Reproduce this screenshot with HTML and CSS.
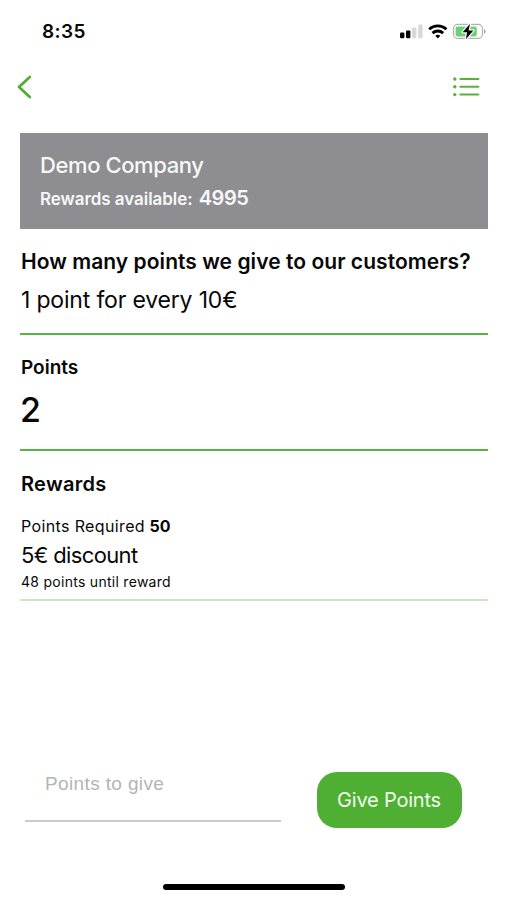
FILE: index.html
```html
<!DOCTYPE html>
<html lang="en">
<head>
  <meta charset="UTF-8" />
  <meta name="viewport" content="width=device-width, initial-scale=1.0"/>
  <title>Demo Company</title>
  <link rel="stylesheet" href="styles.css">
</head>
<body>
  <div class="screen">
    <!-- Status bar -->
    <div class="status-bar">
      <span class="time">8:35</span>
      <svg class="status-icons" width="88" height="20" viewBox="0 0 88 20">
        <rect x="1" y="11.6" width="4.4" height="5.6" rx="1.2"/>
        <rect x="7" y="9.4" width="4.4" height="7.8" rx="1.2"/>
        <rect x="13" y="6.6" width="4.4" height="10.6" rx="1.2" fill="#d8d8d8"/>
        <rect x="19.2" y="3.6" width="4.4" height="13.6" rx="1.2" fill="#d8d8d8"/>
        <g fill="none" stroke="#000" stroke-width="2.8">
          <path d="M30.200 8.300a12.600 12.600 0 0 1 17.200 0"/>
          <path d="M33.500 12.100a7.800 7.800 0 0 1 10.600 0"/>
        </g>
        <path d="M38.800 17.400l-2.500-2.600a3.800 3.800 0 0 1 5 0z"/>
        <rect x="54.500" y="3.400" width="29" height="14" rx="4.200" fill="none" stroke="#b2b2b2" stroke-width="1.200"/>
        <path d="M85 8c2.200.8 2.200 4 0 4.800z" fill="#a9a9a9"/>
        <rect x="56.600" y="5.400" width="21.200" height="10" rx="2.200" fill="#6bd273"/>
        <path d="M71 2.700L63.600 11.200h4.500l-1.200 7 7.400-8.800h-4.700z" stroke="#fff" stroke-width="2.400" stroke-linejoin="round" paint-order="stroke"/>
      </svg>
    </div>

    <!-- Navigation -->
    <div class="nav">
      <svg width="17" height="26" viewBox="0 0 17 26">
        <path d="M14.800 3L4 13l10.800 10" fill="none" stroke="#4caf30" stroke-width="2.700" stroke-linecap="round" stroke-linejoin="round"/>
      </svg>
      <svg width="28" height="22" viewBox="0 0 28 22" fill="#55b23b">
        <circle cx="2.800" cy="3" r="1.700"/>
        <circle cx="2.800" cy="10.800" r="1.700"/>
        <circle cx="2.800" cy="18.600" r="1.700"/>
        <rect x="7.400" y="2" width="20" height="2" rx="1"/>
        <rect x="7.400" y="9.800" width="20" height="2" rx="1"/>
        <rect x="7.400" y="17.600" width="20" height="2" rx="1"/>
      </svg>
    </div>

    <div class="content">
      <div class="company">
        <div class="company-name">Demo Company</div>
        <div class="available"><span class="available-label">Rewards available:</span> <span class="available-count">4995</span></div>
      </div>

      <div class="section rate">
        <div class="question">How many points we give to our customers?</div>
        <div class="answer">1 point for every 10€</div>
      </div>

      <div class="section points">
        <div class="points-title">Points</div>
        <div class="points-value">2</div>
      </div>

      <div class="rewards-title">Rewards</div>
      <div class="reward">
        <div class="required"><span class="required-label">Points Required</span> <b>50</b></div>
        <div class="discount">5€ discount</div>
        <div class="until">48 points until reward</div>
      </div>
    </div>

    <!-- Give points form -->
    <div class="give-form">
      <input class="give-input" type="text" placeholder="Points to give" />
      <button class="give-btn">Give Points</button>
    </div>
    <div class="home-indicator"></div>
  </div>
</body>
</html>
```
FILE: styles.css
```css
* {
  box-sizing: border-box;
  font-family: Inter, sans-serif;
}
body {
  margin: 0;
  background: #fff;
  color: #080808;
}
.screen {
  width: 507px;
  height: 900px;
  display: flex;
  flex-direction: column;
  overflow: hidden;
  white-space: nowrap;
}
.status-bar {
  height: 62px;
  padding: 20px 20px 0 42px;
  display: flex;
  justify-content: space-between;
  align-items: flex-start;
}
.time {
  font-size: 19px;
  line-height: 24px;
  font-weight: 600;
  letter-spacing: 0.4px;
}
.status-icons {
  margin-top: 1px;
}
.nav {
  height: 71px;
  padding: 12px 27px 0 15px;
  display: flex;
  justify-content: space-between;
  align-items: flex-start;
}
.nav svg + svg {
  margin-top: 2px;
}
.content {
  padding: 0 19px 0 20px;
}
.company {
  height: 96px;
  padding: 18px 20px;
  background: #8e8d92;
  color: #f8f8f8;
}
.company-name {
  font-size: 22px;
  line-height: 28px;
  font-weight: 500;
  letter-spacing: -0.4px;
}
.available {
  display: flex;
  align-items: baseline;
  gap: 6px;
  margin-top: 5px;
  line-height: 28px;
}
.available-label {
  font-size: 17px;
  font-weight: 600;
  letter-spacing: -0.05px;
}
.available-count {
  font-size: 20px;
  font-weight: 600;
  letter-spacing: -0.4px;
}
.section {
  border-bottom: 2px solid #55b53f;
  padding-left: 1px;
}
.rate {
  height: 106px;
  padding-top: 18px;
}
.question {
  font-size: 21px;
  line-height: 30px;
  font-weight: 600;
  letter-spacing: 0.05px;
}
.answer {
  margin-top: 7px;
  font-size: 23px;
  line-height: 32px;
  letter-spacing: -0.18px;
}
.points {
  height: 116px;
  padding-top: 20px;
}
.points-title {
  font-size: 19px;
  line-height: 26px;
  font-weight: 600;
}
.points-value {
  margin-top: 9px;
  margin-left: -1px;
  font-size: 34px;
  line-height: 40px;
  font-weight: 500;
}
.rewards-title {
  padding: 20px 0 0 1px;
  font-size: 20px;
  line-height: 26px;
  font-weight: 600;
  letter-spacing: 0.3px;
}
.reward {
  height: 104px;
  padding: 18px 0 0 1px;
  border-bottom: 2px solid #c9e8c2;
}
.required {
  font-size: 16px;
  line-height: 22px;
}
.required-label {
  letter-spacing: 0.37px;
}
.discount {
  margin-top: 4px;
  font-size: 22px;
  line-height: 28px;
  letter-spacing: -0.65px;
}
.until {
  margin-top: 3px;
  font-size: 14px;
  line-height: 20px;
  letter-spacing: 0.28px;
}
.give-form {
  margin-top: auto;
  padding: 0 45px 0 25px;
  display: flex;
  justify-content: space-between;
  align-items: flex-start;
}
.give-input {
  width: 256px;
  height: 50px;
  padding: 0 20px 25px;
  border: none;
  border-bottom: 2px solid #cbcbcb;
  outline: none;
  background: none;
  font-size: 19px;
  font-family: "Liberation Sans", Arial, sans-serif;
  letter-spacing: 0.37px;
}
.give-input::placeholder {
  color: #b4b4b4;
}
.give-btn {
  width: 145px;
  height: 56px;
  padding: 0 1px 0 0;
  border: none;
  border-radius: 20px;
  background: #4faf32;
  color: #f2fbef;
  font-size: 20px;
  letter-spacing: -0.2px;
  cursor: pointer;
}
.home-indicator {
  width: 182px;
  height: 6px;
  margin: 56px auto 10px 163px;
  border-radius: 3px;
  background: #000;
}
```
